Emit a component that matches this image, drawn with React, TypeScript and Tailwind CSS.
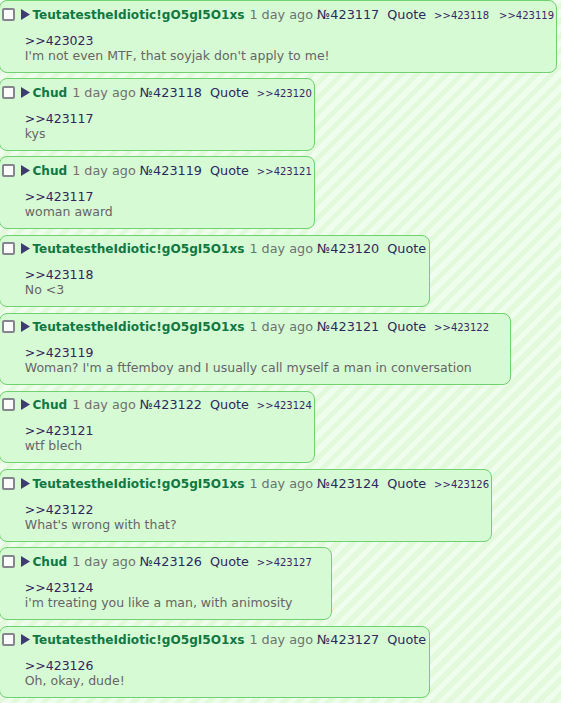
import React from 'react';

type Post = {
  name: string;
  no: number;
  backlinks: number[];
  quote: number;
  text: string;
};

const TRIP = 'TeutatestheIdiotic!gO5gI5O1xs';

const posts: Post[] = [
  { name: TRIP, no: 423117, backlinks: [423118, 423119], quote: 423023, text: "I'm not even MTF, that soyjak don't apply to me!" },
  { name: 'Chud', no: 423118, backlinks: [423120], quote: 423117, text: 'kys' },
  { name: 'Chud', no: 423119, backlinks: [423121], quote: 423117, text: 'woman award' },
  { name: TRIP, no: 423120, backlinks: [], quote: 423118, text: 'No <3' },
  { name: TRIP, no: 423121, backlinks: [423122], quote: 423119, text: "Woman? I'm a ftfemboy and I usually call myself a man in conversation" },
  { name: 'Chud', no: 423122, backlinks: [423124], quote: 423121, text: 'wtf blech' },
  { name: TRIP, no: 423124, backlinks: [423126], quote: 423122, text: "What's wrong with that?" },
  { name: 'Chud', no: 423126, backlinks: [423127], quote: 423124, text: "i'm treating you like a man, with animosity" },
  { name: TRIP, no: 423127, backlinks: [], quote: 423126, text: 'Oh, okay, dude!' },
];

function Reply({ post }: { post: Post }) {
  return (
    <div className="w-fit -ml-px mb-[5.7px] rounded-[8px] border border-[#6fd16f] bg-[#d6fbd4] px-[2.4px] pt-[4.5px] pb-[9px]">
      <div className="flex h-[17px] items-baseline whitespace-nowrap leading-[17px]">
        <span className="h-[13px] w-[13px] shrink-0 self-center rounded-[2px] border-2 border-[#85848f] bg-[#fbfbfb]" />
        <svg className="ml-[6px] shrink-0 self-center" width="9" height="11" viewBox="0 0 9 11">
          <polygon points="0,0 9,5.5 0,11" fill="#3f3b72" />
        </svg>
        <span className="ml-[2px] text-[12.1px] font-bold text-[#117743]">{post.name}</span>
        <span className="ml-[5px] text-[#707070]">1 day ago</span>
        <span className="ml-[4px] text-[#2c2a5c]">№{post.no}</span>
        <span className="ml-[8px] text-[#2c2a5c]">Quote</span>
        {post.backlinks.map((b, i) => (
          <span key={b} className={`${i === 0 ? 'ml-[8px]' : 'ml-[10px]'} text-[10px] text-[#3a2466]`}>
            &gt;&gt;{b}
          </span>
        ))}
      </div>
      <div className="ml-[22.4px] mt-[10px] pr-[36px] text-[12.5px] leading-[15px]">
        <div className="text-[#34245a]">&gt;&gt;{post.quote}</div>
        <div className="text-[#666468]">{post.text}</div>
      </div>
    </div>
  );
}

export default function App() {
  return (
    <div
      className="min-h-screen overflow-hidden bg-[repeating-linear-gradient(135deg,#effdec_0px,#effdec_5.3px,#e2f9dc_5.3px,#e2f9dc_10.6px)] text-[12.8px] font-['DejaVu_Sans',sans-serif]"
    >
      <div className="flex flex-col items-start">
        {posts.map((p) => (
          <Reply key={p.no} post={p} />
        ))}
      </div>
    </div>
  );
}
